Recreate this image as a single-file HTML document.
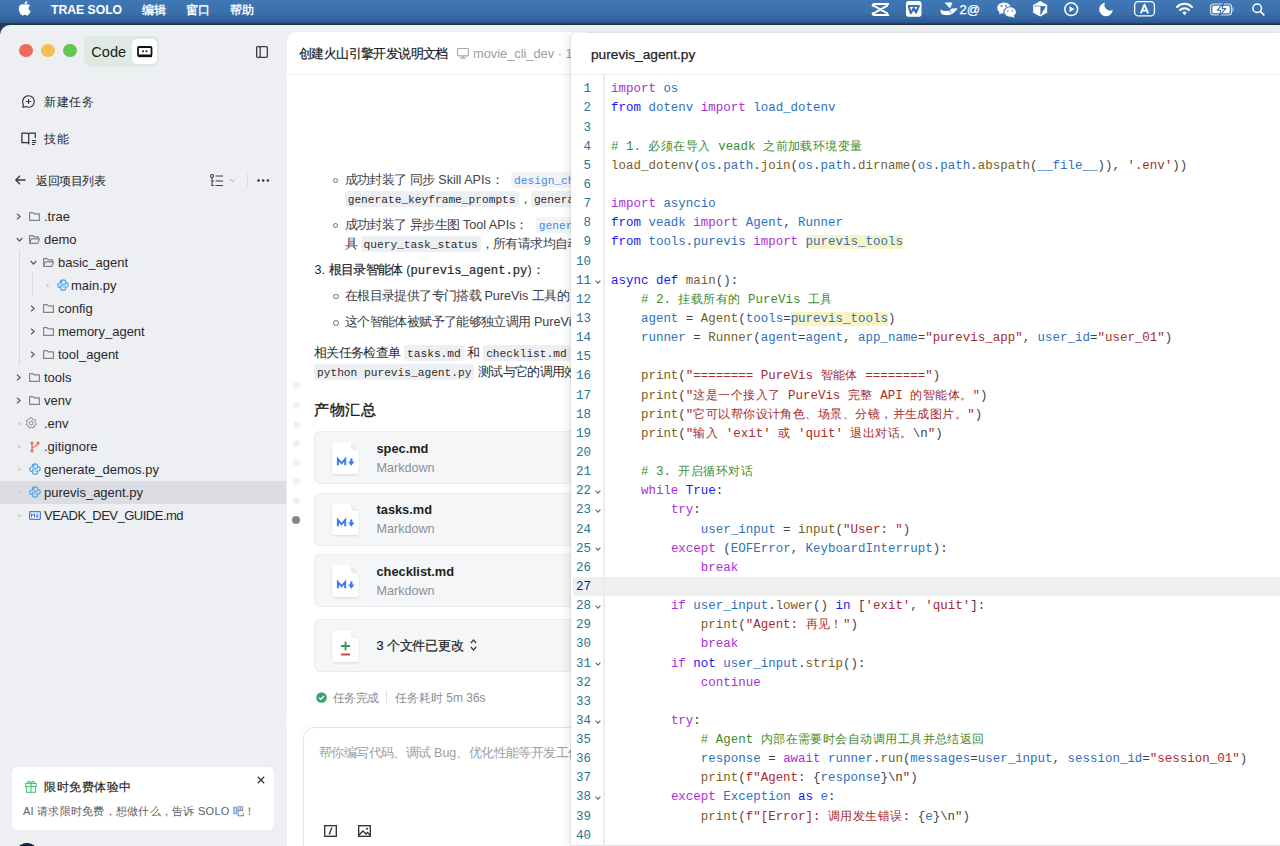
<!DOCTYPE html>
<html><head><meta charset="utf-8"><style>
*{box-sizing:border-box;margin:0;padding:0}
html,body{width:1280px;height:846px;overflow:hidden;background:#eeeff3;font-family:"Liberation Sans",sans-serif;color:#1f2023}
.a{position:absolute}
svg{position:absolute;overflow:visible}
#menubar{position:absolute;left:0;top:0;width:1280px;height:25px;background:linear-gradient(#3f78b5,#3b72ae 45%,#3466a0 72%,#2c5a8e 88%,#264d7a);}
#menubar .shade{position:absolute;left:0;right:0;top:23px;height:2px;background:linear-gradient(#2a4a6e,#1b2635)}
.mt{position:absolute;top:0;height:23px;line-height:19px;color:#fff;font-size:12.5px;white-space:nowrap}
#win{position:absolute;left:0;top:25px;width:1280px;height:821px;background:#eeeff3;border-top-left-radius:10px;overflow:hidden}
#winbg{position:absolute;left:0;top:23px;width:14px;height:14px;background:#253a55}
.tl{position:absolute;width:13.5px;height:13.5px;border-radius:50%}
.side{position:absolute;font-size:13px;color:#26282c;white-space:nowrap;line-height:16px}
.tr{position:absolute;left:0;width:286px;height:23px}
.tr .l{position:absolute;top:0;line-height:23px;font-size:13px;color:#27292e;white-space:nowrap}
.dot{position:absolute;width:3px;height:3px;border-radius:50%;background:#c9cacf;top:10px}
#mid{position:absolute;left:286.5px;top:32px;width:300px;height:814px;background:#fff;border-top-left-radius:9px;overflow:hidden}
#code{position:absolute;left:571px;top:33px;width:709px;height:813px;background:#fff;border-top-left-radius:5px;box-shadow:-1px 0 2px rgba(0,0,0,0.09),-5px 0 10px rgba(0,0,0,0.06);overflow:hidden}
.ln{position:absolute;left:0;width:20px;text-align:right;font-family:"Liberation Mono",monospace;font-size:12.47px;color:#2b7491;height:19.2px;line-height:19.2px}
.cl{position:absolute;left:40px;white-space:pre;font-family:"Liberation Mono",monospace;font-size:12.47px;color:#3b3b3b;height:19.2px;line-height:19.2px}
.cj{letter-spacing:0.45px}
.kp{color:#a92fd6}.kb{color:#1818f0}.v{color:#2f70bd}.f{color:#795e26}.s{color:#a52c2c}.c{color:#3f8a2c}.p{color:#444}.cls{color:#2f70bd}
.hl{background:#f8f4c4}
.mtxt{position:absolute;white-space:nowrap;font-size:12.6px;line-height:19px;color:#5d6068}
.chip{font-family:"Liberation Mono",monospace;font-size:11.2px;background:#eeeff2;border-radius:3px;padding:2.5px 3px 1px;color:#2b2d31}
.link{font-family:"Liberation Mono",monospace;font-size:11.2px;background:#f3f4f6;border-radius:3px;padding:2.5px 3px 1px;color:#4a86f0}
</style></head><body>
<div id="menubar"><div class="shade"></div><svg style="left:19px;top:1px" width="12.5" height="14.7" viewBox="0 0 170 200"><path fill="#fff" d="M150.4 155.6c-2.8 6.4-6.1 12.3-9.9 17.7-5.2 7.4-9.5 12.6-12.8 15.4-5.1 4.7-10.6 7.1-16.5 7.3-4.2 0-9.3-1.2-15.2-3.6-5.9-2.4-11.4-3.6-16.4-3.6-5.2 0-10.9 1.2-16.9 3.6-6 2.4-10.9 3.7-14.6 3.8-5.6 0.2-11.2-2.2-16.8-7.4-3.6-3.1-8.1-8.5-13.4-16.1-5.7-8.1-10.4-17.5-14.1-28.2C-0.2 123.1-2 111.6-2 100.5c0-12.7 2.7-23.7 8.2-32.9 4.3-7.4 10.1-13.2 17.2-17.4 7.2-4.3 14.9-6.4 23.3-6.6 4.6 0 10.6 1.4 18 4.2 7.4 2.8 12.2 4.2 14.3 4.2 1.6 0 6.9-1.7 15.9-5 8.5-3.1 15.7-4.4 21.6-3.9 16 1.3 28 7.6 36 19-14.3 8.7-21.4 20.8-21.3 36.4 0.1 12.1 4.5 22.2 13.2 30.3 3.9 3.7 8.3 6.6 13.2 8.6-1.1 3.1-2.2 6.1-3.4 9zM113.8 7.6c0 9.5-3.5 18.4-10.4 26.6-8.4 9.8-18.5 15.4-29.5 14.5-0.1-1.1-0.2-2.3-0.2-3.6 0-9.1 4-18.9 11-26.8 3.5-4 8-7.3 13.4-10 5.4-2.6 10.5-4.1 15.3-4.3 0.1 1.2 0.2 2.5 0.2 3.6z"/></svg><div class="mt" style="left:51px;top:0.8px;font-weight:bold;font-size:12.2px;letter-spacing:0px">TRAE SOLO</div><div class="mt" style="left:142px;top:1px;font-size:12px;letter-spacing:0.3px;-webkit-text-stroke:0.35px #fff">编辑</div><div class="mt" style="left:186px;top:1px;font-size:12px;letter-spacing:0.3px;-webkit-text-stroke:0.35px #fff">窗口</div><div class="mt" style="left:230px;top:1px;font-size:12px;letter-spacing:0.3px;-webkit-text-stroke:0.35px #fff">帮助</div><svg style="left:871px;top:2px" width="19" height="15" viewBox="0 0 19 15"><path d="M17.3 2 L3.5 2 Q1.3 2 1.6 3.8 M17.3 13 L3.5 13 Q1.3 13 1.6 11.2 M2.6 3.6 L16.3 11.4 M16.3 3.6 L2.6 11.4" stroke="#fff" stroke-width="1.8" fill="none" stroke-linecap="round"/></svg><svg style="left:905.8px;top:1.2px" width="16" height="16" viewBox="0 0 16 16"><rect x="0" y="0" width="15.5" height="15.7" rx="2.8" fill="#fff"/><path d="M2.6 5 L4.8 12.2 L7.8 7 L10 11.5 L13 4.6 M2 5 L13.5 5" stroke="#3a6fab" stroke-width="2.1" fill="none" stroke-linejoin="round"/></svg><svg style="left:940px;top:2px" width="18" height="14" viewBox="0 0 18 14"><path d="M4.5 0.5 L12.5 0.5 L10 6.5 Z" fill="#fff"/><path d="M0.3 7.5 C3 9 6 9.5 9 8.8 L12 6.5 L17.7 6.3 C16 9 13.5 12.2 9 13 C6 13.5 3 12.8 1 11.5 Z" fill="#fff"/><path d="M9 8.8 L11.5 11" stroke="#3a6fab" stroke-width="0.9"/></svg><div class="mt" style="left:959.5px;font-size:13px;top:0.3px;-webkit-text-stroke:0.25px #fff">2@</div><svg style="left:997px;top:1.5px" width="20" height="16" viewBox="0 0 20 16"><ellipse cx="7" cy="6" rx="6.8" ry="5.6" fill="#fff"/><path d="M2.5 9.5 L2.3 12.2 L5.5 10.8Z" fill="#fff"/><ellipse cx="13.2" cy="10" rx="6.3" ry="5.2" fill="#fff" stroke="#3a6fab" stroke-width="1.1"/><path d="M16.5 13.5 L18 15.8 L14 14.8Z" fill="#fff"/><circle cx="4.5" cy="4" r="0.9" fill="#3a6fab"/><circle cx="9" cy="4" r="0.9" fill="#3a6fab"/><circle cx="10.8" cy="9" r="0.8" fill="#3a6fab"/><circle cx="15.3" cy="9" r="0.8" fill="#3a6fab"/></svg><svg style="left:1033px;top:1.2px" width="15" height="16" viewBox="0 0 15 16"><path d="M7.2 0 L14.2 3.9 L14.2 11.7 L7.2 15.6 L0.2 11.7 L0.2 3.9 Z" fill="#fff"/><path d="M1.2 4.5 L13 5.2 L7.6 14.3 Z" fill="#3a6fab"/><path d="M2.2 5.2 L7.4 5.5 L7.4 13.2 L2.2 10.8Z" fill="#fff"/></svg><svg style="left:1063.5px;top:2px" width="15" height="15" viewBox="0 0 15 15"><circle cx="7.2" cy="7.2" r="6.4" stroke="#fff" stroke-width="1.5" fill="none"/><path d="M5.5 4.3 L10.6 7.2 L5.5 10.1Z" fill="#fff"/></svg><svg style="left:1098.5px;top:2.2px" width="15" height="15" viewBox="0 0 15 15"><path d="M5.97 0.781 A6.8 6.8 0 1 0 13.79 7.735 A5.5 5.5 0 0 1 5.97 0.781Z" fill="#fff"/></svg><svg style="left:1134px;top:1.2px" width="22" height="16" viewBox="0 0 22 16"><rect x="0.65" y="0.65" width="19.8" height="14.3" rx="3.8" stroke="#fff" stroke-width="1.3" fill="none"/><path d="M6.8 12.3 L10.5 3.6 L14.2 12.3 M8.2 9.6 L12.8 9.6" stroke="#fff" stroke-width="1.8" fill="none" stroke-linejoin="round"/></svg><svg style="left:1175.5px;top:2.5px" width="18" height="13" viewBox="0 0 18 13"><path d="M8.5 12.3 L6.3 9.6 A3.3 3.3 0 0 1 10.7 9.6Z" fill="#fff"/><path d="M4 7 A6.5 6.5 0 0 1 13 7 M1 4 A10.5 10.5 0 0 1 16 4" stroke="#fff" stroke-width="2" fill="none" stroke-linecap="round"/></svg><svg style="left:1210px;top:3px" width="25" height="14" viewBox="0 0 25 14"><rect x="0.6" y="1" width="21" height="11" rx="3" stroke="#fff" stroke-width="1.1" fill="none" opacity="0.8"/><rect x="2.4" y="2.8" width="17.4" height="7.4" rx="1.5" fill="#fff"/><path d="M23 4.6 L23 8.4" stroke="#fff" stroke-width="1.3" opacity="0.55"/><path d="M13.6 0.3 L7.2 7.2 L10.9 7.2 L9.1 13.2 L15.8 5.6 L12.1 5.6 Z" fill="#fff" stroke="#3a6fab" stroke-width="1.1" stroke-linejoin="round"/></svg><svg style="left:1251.5px;top:2.5px" width="13" height="13" viewBox="0 0 13 13"><circle cx="5.2" cy="5.2" r="4.3" stroke="#fff" stroke-width="1.5" fill="none"/><path d="M8.4 8.4 L11.8 11.8" stroke="#fff" stroke-width="1.7" stroke-linecap="round"/></svg></div><div id="winbg"></div><div id="win"></div><div class="tl" style="left:19.2px;top:43.8px;background:#ee6a5f"></div><div class="tl" style="left:41.2px;top:43.8px;background:#f5be4f"></div><div class="tl" style="left:63.2px;top:43.8px;background:#62c655"></div><div class="a" style="left:84px;top:36px;width:75px;height:31px;border-radius:8px;background:#dde9e2"></div><div class="side" style="left:91.3px;top:44px;font-size:14.6px;color:#1c1c1c;line-height:17px">Code</div><div class="a" style="left:132px;top:39px;width:25px;height:25px;border-radius:5px;background:#fff"></div><svg style="left:137px;top:46px" width="16" height="12" viewBox="0 0 16 12"><rect x="1" y="1" width="13.5" height="8.5" rx="1" stroke="#111" stroke-width="1.8" fill="none"/><path d="M1 10.5 L15 10.5" stroke="#111" stroke-width="1.3"/><circle cx="6" cy="5.3" r="1" fill="#111"/><circle cx="9.5" cy="5.3" r="1" fill="#111"/></svg><svg style="left:256px;top:46px" width="12" height="12" viewBox="0 0 12 12"><rect x="0.65" y="0.65" width="10.7" height="10.7" rx="1" stroke="#3a3b40" stroke-width="1.3" fill="none"/><path d="M4.2 0.7 L4.2 11.3" stroke="#3a3b40" stroke-width="1.3"/></svg><svg style="left:22px;top:94.6px" width="13" height="13" viewBox="0 0 14 14"><path d="M7 0.8 A6.2 6.2 0 1 1 4.2 12.5 L0.8 13.2 L1.6 10.2 A6.2 6.2 0 0 1 7 0.8Z" stroke="#35373c" stroke-width="1.2" fill="none" stroke-linejoin="round"/><path d="M7 4.2 L7 9.8 M4.2 7 L9.8 7" stroke="#35373c" stroke-width="1.2"/></svg><div class="side" style="left:44px;top:94px;font-size:12.4px;letter-spacing:0.5px">新建任务</div><svg style="left:21px;top:131.8px" width="16" height="14" viewBox="0 0 16 14"><path d="M7.75 2.2 Q7.4 1.1 6.5 1.1 L0.9 1.1 L0.9 10.7 L6.6 10.7 Q7.75 10.9 7.75 11.9 L7.75 2.2 Q8.1 1.1 9 1.1 L14.3 1.1 L14.3 6" stroke="#2e3034" stroke-width="1.2" fill="none" stroke-linejoin="round"/><path d="M10.9 8.5 L15.2 8.5 M10.9 10.5 L15.2 10.5 M10.9 12.5 L13.8 12.5" stroke="#2e3034" stroke-width="1.1"/></svg><div class="side" style="left:44px;top:130.5px;font-size:12.4px;letter-spacing:0.5px">技能</div><svg style="left:15px;top:175px" width="11" height="10" viewBox="0 0 11 10"><path d="M10.5 5 L1 5 M5 0.8 L0.8 5 L5 9.2" stroke="#35373c" stroke-width="1.3" fill="none"/></svg><div class="side" style="left:36px;top:172.5px;font-size:11.8px;letter-spacing:-0.4px">返回项目列表</div><svg style="left:210px;top:174px" width="14" height="13" viewBox="0 0 14 13"><circle cx="2" cy="2" r="1.5" stroke="#3a3b40" stroke-width="1.1" fill="none"/><path d="M2 3.5 L2 11.5 L4 11.5 M2 7 L4 7" stroke="#3a3b40" stroke-width="1.1" fill="none"/><path d="M5.5 2 L13 2 M5.5 7 L13 7 M5.5 11.5 L13 11.5" stroke="#3a3b40" stroke-width="1.2"/></svg><svg style="left:230px;top:178.8px" width="5" height="3" viewBox="0 0 5 3"><path d="M0.4 0.4 L2.5 2.5 L4.6 0.4" stroke="#9a9ca3" stroke-width="0.9" fill="none"/></svg><div class="a" style="left:247px;top:173px;width:1.2px;height:15px;background:#dfe0e4"></div><svg style="left:257.3px;top:178.6px" width="13" height="3" viewBox="0 0 13 3"><circle cx="1.5" cy="1.5" r="1.25" fill="#2e3034"/><circle cx="6.2" cy="1.5" r="1.25" fill="#2e3034"/><circle cx="10.9" cy="1.5" r="1.25" fill="#2e3034"/></svg><div class="a" style="left:0;top:481px;width:286px;height:23px;background:#dcdde2"></div><div class="a" style="left:19px;top:250px;width:1px;height:115px;background:#d8d9de"></div><div class="a" style="left:32px;top:273px;width:1px;height:23px;background:#d8d9de"></div><svg style="left:16px;top:212.5px" width="6" height="7" viewBox="0 0 6 7"><path d="M1 0.8 L4.2 3.5 L1 6.2" stroke="#5a5c62" stroke-width="1.2" fill="none"/></svg><svg style="left:29px;top:211.5px" width="11" height="9" viewBox="0 0 11 9"><path d="M0.6 0.6 L4 0.6 L5.2 1.9 L10.4 1.9 L10.4 8.4 L0.6 8.4 Z" stroke="#80848f" stroke-width="1.2" fill="none" stroke-linejoin="round"/></svg><div class="tr" style="top:204.5px"><div class="l" style="left:44px;">.trae</div></div><svg style="left:16px;top:236.5px" width="7" height="5" viewBox="0 0 7 5"><path d="M0.8 1 L3.5 4 L6.2 1" stroke="#5a5c62" stroke-width="1.2" fill="none"/></svg><svg style="left:29px;top:234.5px" width="11" height="9" viewBox="0 0 11 9"><path d="M0.6 8.4 L0.6 0.6 L4 0.6 L5.2 1.9 L9.4 1.9 L9.4 3.6 M0.6 8.4 L2.3 3.8 L10.6 3.8 L8.8 8.4 Z" stroke="#80848f" stroke-width="1.2" fill="none" stroke-linejoin="round"/></svg><div class="tr" style="top:227.5px"><div class="l" style="left:44px;">demo</div></div><svg style="left:30px;top:259.5px" width="7" height="5" viewBox="0 0 7 5"><path d="M0.8 1 L3.5 4 L6.2 1" stroke="#5a5c62" stroke-width="1.2" fill="none"/></svg><svg style="left:43px;top:257.5px" width="11" height="9" viewBox="0 0 11 9"><path d="M0.6 8.4 L0.6 0.6 L4 0.6 L5.2 1.9 L9.4 1.9 L9.4 3.6 M0.6 8.4 L2.3 3.8 L10.6 3.8 L8.8 8.4 Z" stroke="#80848f" stroke-width="1.2" fill="none" stroke-linejoin="round"/></svg><div class="tr" style="top:250.5px"><div class="l" style="left:58px;">basic_agent</div></div><div class="a" style="left:45.5px;top:283.5px;width:3px;height:3px;border-radius:50%;background:#cfd0d5"></div><svg style="left:56.5px;top:279px" width="12" height="12" viewBox="0 0 12 12"><path d="M6 0.8 C3.5 0.8 3.3 1.8 3.3 2.8 L3.3 4 L6.2 4 M3 4 C1.5 4 0.8 5 0.8 6.2 C0.8 7.6 1.6 8.4 2.8 8.4 L3.6 8.4 L3.6 7.5 C3.6 6.6 4.4 5.9 5.3 5.9 L6.8 5.9 C7.7 5.9 8.5 5.2 8.5 4.3 L8.5 2.6 C8.5 1.5 7.5 0.8 6 0.8Z M6 11.2 C8.5 11.2 8.7 10.2 8.7 9.2 L8.7 8 L5.8 8 M9 8 C10.5 8 11.2 7 11.2 5.8 C11.2 4.4 10.4 3.6 9.2 3.6 L8.4 3.6" stroke="#4ea8e8" stroke-width="1.2" fill="none" stroke-linejoin="round"/><path d="M3.6 7.5 L3.6 9.4 C3.6 10.5 4.5 11.2 6 11.2" stroke="#4ea8e8" stroke-width="1.2" fill="none"/></svg><div class="tr" style="top:273.5px"><div class="l" style="left:71px;">main.py</div></div><svg style="left:30px;top:304.5px" width="6" height="7" viewBox="0 0 6 7"><path d="M1 0.8 L4.2 3.5 L1 6.2" stroke="#5a5c62" stroke-width="1.2" fill="none"/></svg><svg style="left:43px;top:303.5px" width="11" height="9" viewBox="0 0 11 9"><path d="M0.6 0.6 L4 0.6 L5.2 1.9 L10.4 1.9 L10.4 8.4 L0.6 8.4 Z" stroke="#80848f" stroke-width="1.2" fill="none" stroke-linejoin="round"/></svg><div class="tr" style="top:296.5px"><div class="l" style="left:58px;">config</div></div><svg style="left:30px;top:327.5px" width="6" height="7" viewBox="0 0 6 7"><path d="M1 0.8 L4.2 3.5 L1 6.2" stroke="#5a5c62" stroke-width="1.2" fill="none"/></svg><svg style="left:43px;top:326.5px" width="11" height="9" viewBox="0 0 11 9"><path d="M0.6 0.6 L4 0.6 L5.2 1.9 L10.4 1.9 L10.4 8.4 L0.6 8.4 Z" stroke="#80848f" stroke-width="1.2" fill="none" stroke-linejoin="round"/></svg><div class="tr" style="top:319.5px"><div class="l" style="left:58px;">memory_agent</div></div><svg style="left:30px;top:350.5px" width="6" height="7" viewBox="0 0 6 7"><path d="M1 0.8 L4.2 3.5 L1 6.2" stroke="#5a5c62" stroke-width="1.2" fill="none"/></svg><svg style="left:43px;top:349.5px" width="11" height="9" viewBox="0 0 11 9"><path d="M0.6 0.6 L4 0.6 L5.2 1.9 L10.4 1.9 L10.4 8.4 L0.6 8.4 Z" stroke="#80848f" stroke-width="1.2" fill="none" stroke-linejoin="round"/></svg><div class="tr" style="top:342.5px"><div class="l" style="left:58px;">tool_agent</div></div><svg style="left:16px;top:373.5px" width="6" height="7" viewBox="0 0 6 7"><path d="M1 0.8 L4.2 3.5 L1 6.2" stroke="#5a5c62" stroke-width="1.2" fill="none"/></svg><svg style="left:29px;top:372.5px" width="11" height="9" viewBox="0 0 11 9"><path d="M0.6 0.6 L4 0.6 L5.2 1.9 L10.4 1.9 L10.4 8.4 L0.6 8.4 Z" stroke="#80848f" stroke-width="1.2" fill="none" stroke-linejoin="round"/></svg><div class="tr" style="top:365.5px"><div class="l" style="left:44px;">tools</div></div><svg style="left:16px;top:396.5px" width="6" height="7" viewBox="0 0 6 7"><path d="M1 0.8 L4.2 3.5 L1 6.2" stroke="#5a5c62" stroke-width="1.2" fill="none"/></svg><svg style="left:29px;top:395.5px" width="11" height="9" viewBox="0 0 11 9"><path d="M0.6 0.6 L4 0.6 L5.2 1.9 L10.4 1.9 L10.4 8.4 L0.6 8.4 Z" stroke="#80848f" stroke-width="1.2" fill="none" stroke-linejoin="round"/></svg><div class="tr" style="top:388.5px"><div class="l" style="left:44px;">venv</div></div><div class="a" style="left:17.5px;top:421.5px;width:3px;height:3px;border-radius:50%;background:#cfd0d5"></div><svg style="left:25px;top:417px" width="12" height="12" viewBox="0 0 12 12"><path d="M6 0.8 L7.2 1 L7.5 2.3 L8.6 2.9 L9.9 2.4 L10.7 3.4 L10 4.6 L10.3 5.9 L11.3 6.6 L11 7.8 L9.7 8 L8.9 9 L9.2 10.3 L8.1 11 L7 10.2 L5.8 10.3 L4.8 11.1 L3.7 10.5 L3.8 9.2 L3 8.3 L1.6 8.1 L1.2 7 L2.2 6.1 L2.2 4.9 L1.3 4 L1.9 2.9 L3.2 3 L4.1 2.2 L4.5 1 Z" stroke="#868a94" stroke-width="1" fill="none" stroke-linejoin="round"/><circle cx="6.2" cy="6.1" r="1.8" stroke="#868a94" stroke-width="1" fill="none"/></svg><div class="tr" style="top:411.5px"><div class="l" style="left:44px;">.env</div></div><div class="a" style="left:17.5px;top:444.5px;width:3px;height:3px;border-radius:50%;background:#cfd0d5"></div><svg style="left:30px;top:440.5px" width="10" height="12" viewBox="0 0 10 12"><circle cx="2" cy="2" r="1.6" fill="#e8714e"/><circle cx="8" cy="2" r="1.6" fill="#e8714e"/><circle cx="2" cy="10" r="1.6" fill="#e8714e"/><path d="M2 2 L2 10 M8 2 C8 6 2 5 2 8" stroke="#e8714e" stroke-width="1.3" fill="none"/></svg><div class="tr" style="top:434.5px"><div class="l" style="left:44px;">.gitignore</div></div><div class="a" style="left:17.5px;top:467.5px;width:3px;height:3px;border-radius:50%;background:#cfd0d5"></div><svg style="left:28.5px;top:463px" width="12" height="12" viewBox="0 0 12 12"><path d="M6 0.8 C3.5 0.8 3.3 1.8 3.3 2.8 L3.3 4 L6.2 4 M3 4 C1.5 4 0.8 5 0.8 6.2 C0.8 7.6 1.6 8.4 2.8 8.4 L3.6 8.4 L3.6 7.5 C3.6 6.6 4.4 5.9 5.3 5.9 L6.8 5.9 C7.7 5.9 8.5 5.2 8.5 4.3 L8.5 2.6 C8.5 1.5 7.5 0.8 6 0.8Z M6 11.2 C8.5 11.2 8.7 10.2 8.7 9.2 L8.7 8 L5.8 8 M9 8 C10.5 8 11.2 7 11.2 5.8 C11.2 4.4 10.4 3.6 9.2 3.6 L8.4 3.6" stroke="#4ea8e8" stroke-width="1.2" fill="none" stroke-linejoin="round"/><path d="M3.6 7.5 L3.6 9.4 C3.6 10.5 4.5 11.2 6 11.2" stroke="#4ea8e8" stroke-width="1.2" fill="none"/></svg><div class="tr" style="top:457.5px"><div class="l" style="left:44px;">generate_demos.py</div></div><div class="a" style="left:17.5px;top:490.5px;width:3px;height:3px;border-radius:50%;background:#cfd0d5"></div><svg style="left:28.5px;top:486px" width="12" height="12" viewBox="0 0 12 12"><path d="M6 0.8 C3.5 0.8 3.3 1.8 3.3 2.8 L3.3 4 L6.2 4 M3 4 C1.5 4 0.8 5 0.8 6.2 C0.8 7.6 1.6 8.4 2.8 8.4 L3.6 8.4 L3.6 7.5 C3.6 6.6 4.4 5.9 5.3 5.9 L6.8 5.9 C7.7 5.9 8.5 5.2 8.5 4.3 L8.5 2.6 C8.5 1.5 7.5 0.8 6 0.8Z M6 11.2 C8.5 11.2 8.7 10.2 8.7 9.2 L8.7 8 L5.8 8 M9 8 C10.5 8 11.2 7 11.2 5.8 C11.2 4.4 10.4 3.6 9.2 3.6 L8.4 3.6" stroke="#4ea8e8" stroke-width="1.2" fill="none" stroke-linejoin="round"/><path d="M3.6 7.5 L3.6 9.4 C3.6 10.5 4.5 11.2 6 11.2" stroke="#4ea8e8" stroke-width="1.2" fill="none"/></svg><div class="tr" style="top:480.5px"><div class="l" style="left:44px;">purevis_agent.py</div></div><div class="a" style="left:17.5px;top:513.5px;width:3px;height:3px;border-radius:50%;background:#cfd0d5"></div><svg style="left:29px;top:510.5px" width="12" height="9" viewBox="0 0 12 9"><rect x="0.6" y="0.6" width="10.8" height="7.8" rx="0.8" stroke="#4a7ee6" stroke-width="1.2" fill="none"/><path d="M2.5 6.3 L2.5 2.7 L4 4.3 L5.5 2.7 L5.5 6.3" stroke="#4a7ee6" stroke-width="1" fill="none"/><path d="M8.2 2.5 L8.2 6 M6.9 4.8 L8.2 6.3 L9.5 4.8" stroke="#4a7ee6" stroke-width="1" fill="none"/></svg><div class="tr" style="top:503.5px"><div class="l" style="left:44px;letter-spacing:-0.5px;">VEADK_DEV_GUIDE.md</div></div><div class="a" style="left:12px;top:767px;width:262px;height:63px;background:#fff;border-radius:6px"></div><svg style="left:25px;top:780px" width="12" height="13" viewBox="0 0 12 13"><rect x="0.7" y="3.5" width="10.6" height="3" stroke="#4cc27a" stroke-width="1.1" fill="none"/><rect x="1.5" y="6.5" width="9" height="5.8" stroke="#4cc27a" stroke-width="1.1" fill="none"/><path d="M6 3.5 L6 12.3 M6 3.3 C4.5 0.5 2 1 3 3.3 M6 3.3 C7.5 0.5 10 1 9 3.3" stroke="#4cc27a" stroke-width="1.1" fill="none"/></svg><div class="side" style="left:44px;top:779px;font-size:12px;letter-spacing:0.58px;-webkit-text-stroke:0.15px #1d1e21;color:#1d1e21">限时免费体验中</div><svg style="left:257px;top:776px" width="8" height="8" viewBox="0 0 8 8"><path d="M0.8 0.8 L7.2 7.2 M7.2 0.8 L0.8 7.2" stroke="#3a3b40" stroke-width="1.3"/></svg><div class="side" style="left:23px;top:803px;font-size:11px;letter-spacing:0.25px;color:#5e6067">AI 请求限时免费，想做什么，告诉 SOLO 吧！</div><div class="a" style="left:13.4px;top:840.5px;width:28px;height:28px;border-radius:50%;background:#14243a;border:2.5px solid #f3efe3"></div>
<div id="mid"></div><div class="a" style="left:286px;top:74px;width:286px;height:1px;background:#eeeff1"></div><div class="side" style="left:299px;top:46.3px;font-size:12.5px;letter-spacing:-0.6px;-webkit-text-stroke:0.2px #1b1c1f;color:#1b1c1f">创建火山引擎开发说明文档</div><svg style="left:456.5px;top:47.8px" width="12" height="11" viewBox="0 0 12 11"><rect x="0.55" y="0.55" width="10.9" height="7.3" rx="1" stroke="#a3a5ab" stroke-width="1.1" fill="none"/><path d="M6 7.9 L6 9.9 M3.4 10.1 L8.6 10.1" stroke="#a3a5ab" stroke-width="1.1"/></svg><div class="side" style="left:473px;top:45.6px;font-size:12.8px;color:#9a9ca2">movie_cli_dev · 1</div><div class="a" style="left:332.8px;top:177.5px;width:5.5px;height:5.5px;border-radius:50%;border:1px solid #6d7077"></div><div class="mtxt" style="left:344.7px;top:170.5px;color:#3f4247"><span style="letter-spacing:-0.64px">成功封装了</span> <span style="letter-spacing:-0.64px">同步</span> Skill APIs<span style="letter-spacing:-0.64px">：</span><span style="display:inline-block;width:8px"></span><span class="link">design_character</span></div><div class="mtxt" style="left:344.7px;top:189.5px;color:#3f4247"><span class="chip">generate_keyframe_prompts</span><span style="letter-spacing:-0.64px">，</span><span class="chip">generate_storyboard</span></div><div class="a" style="left:332.8px;top:222.8px;width:5.5px;height:5.5px;border-radius:50%;border:1px solid #6d7077"></div><div class="mtxt" style="left:344.7px;top:215.8px;color:#3f4247"><span style="letter-spacing:-0.64px">成功封装了</span> <span style="letter-spacing:-0.64px">异步生图</span> Tool APIs<span style="letter-spacing:-0.64px">：</span><span style="display:inline-block;width:8px"></span><span class="link">generate_image</span></div><div class="mtxt" style="left:344.7px;top:234.8px;color:#3f4247"><span style="letter-spacing:-0.64px">具</span> <span class="chip">query_task_status</span><span style="letter-spacing:-0.64px">，所有请求均自动</span></div><div class="mtxt" style="left:314.5px;top:260.5px;color:#24262a">3. <span style="-webkit-text-stroke:0.2px #24262a"><span style="letter-spacing:-0.64px">根目录智能体</span></span> (<span style="font-family:Liberation Mono;font-size:12.2px;-webkit-text-stroke:0.2px #24262a">purevis_agent.py</span>)<span style="letter-spacing:-0.64px">：</span></div><div class="a" style="left:333.1px;top:293.5px;width:5.5px;height:5.5px;border-radius:50%;border:1px solid #6d7077"></div><div class="mtxt" style="left:345px;top:286.5px;color:#3d4045"><span style="letter-spacing:-0.64px">在根目录提供了专门搭载</span> PureVis <span style="letter-spacing:-0.64px">工具的</span></div><div class="a" style="left:333.1px;top:320.0px;width:5.5px;height:5.5px;border-radius:50%;border:1px solid #6d7077"></div><div class="mtxt" style="left:345px;top:313px;color:#3d4045"><span style="letter-spacing:-0.64px">这个智能体被赋予了能够独立调用</span> PureVis</div><div class="mtxt" style="left:314px;top:343.5px;color:#2b2d31"><span style="letter-spacing:-0.64px">相关任务检查单</span> <span class="chip">tasks.md</span> <span style="letter-spacing:-0.64px">和</span> <span class="chip">checklist.md</span></div><div class="mtxt" style="left:314px;top:362.5px;color:#2b2d31"><span class="chip">python purevis_agent.py</span> <span style="letter-spacing:-0.64px">测试与它的调用效果</span></div><div class="a" style="left:292.5px;top:382.1px;width:7px;height:7px;border-radius:50%;background:#f1f1f3"></div><div class="a" style="left:292.5px;top:401.7px;width:7px;height:7px;border-radius:50%;background:#f1f1f3"></div><div class="a" style="left:292.5px;top:420.9px;width:7px;height:7px;border-radius:50%;background:#f1f1f3"></div><div class="a" style="left:292.5px;top:440.0px;width:7px;height:7px;border-radius:50%;background:#f1f1f3"></div><div class="a" style="left:292.5px;top:459.0px;width:7px;height:7px;border-radius:50%;background:#f1f1f3"></div><div class="a" style="left:292.5px;top:478.2px;width:7px;height:7px;border-radius:50%;background:#f1f1f3"></div><div class="a" style="left:292.5px;top:497.3px;width:7px;height:7px;border-radius:50%;background:#f1f1f3"></div><div class="a" style="left:291.8px;top:515.5px;width:8.5px;height:8.5px;border-radius:50%;background:#84868c"></div><div class="side" style="left:314px;top:400.5px;font-size:15px;letter-spacing:0.67px;-webkit-text-stroke:0.4px #1b1c1f;color:#1b1c1f;line-height:17px">产物汇总</div><div class="a" style="left:313.5px;top:431px;width:300px;height:53px;border-radius:6px;background:#f5f6f8;border:1px solid #ebecef"></div><svg style="left:331.5px;top:441.5px" width="27" height="33" viewBox="0 0 27 33"><defs><filter id="sh" x="-30%" y="-30%" width="160%" height="160%"><feDropShadow dx="0" dy="1" stdDeviation="1" flood-color="#000" flood-opacity="0.12"/></filter></defs><path d="M3 0.5 L19 0.5 L26.5 8 L26.5 29.5 Q26.5 32 24 32 L3 32 Q0.5 32 0.5 29.5 L0.5 3 Q0.5 0.5 3 0.5Z" fill="#fff" filter="url(#sh)"/><path d="M19 0.5 L19 5.5 Q19.5 8 22 8.3 L26.5 8.3 Z" fill="#ececef"/><path d="M5.9 23.3 L5.9 17.2 L9.55 21.2 L13.2 17.2 L13.2 23.3" stroke="#3b7cf0" stroke-width="2" fill="none" stroke-linejoin="miter" stroke-miterlimit="3"/><path d="M18.2 16.4 L20.4 16.4 L20.4 19.5 L22.5 19.5 L19.3 23.8 L16.1 19.5 L18.2 19.5 Z" fill="#3b7cf0"/></svg><div class="side" style="left:376.5px;top:440.5px;font-size:12.8px;font-weight:bold;color:#1d1e21">spec.md</div><div class="side" style="left:376.5px;top:459.5px;font-size:12.6px;color:#8e9096">Markdown</div><div class="a" style="left:313.5px;top:492.5px;width:300px;height:53px;border-radius:6px;background:#f5f6f8;border:1px solid #ebecef"></div><svg style="left:331.5px;top:503.0px" width="27" height="33" viewBox="0 0 27 33"><defs><filter id="sh" x="-30%" y="-30%" width="160%" height="160%"><feDropShadow dx="0" dy="1" stdDeviation="1" flood-color="#000" flood-opacity="0.12"/></filter></defs><path d="M3 0.5 L19 0.5 L26.5 8 L26.5 29.5 Q26.5 32 24 32 L3 32 Q0.5 32 0.5 29.5 L0.5 3 Q0.5 0.5 3 0.5Z" fill="#fff" filter="url(#sh)"/><path d="M19 0.5 L19 5.5 Q19.5 8 22 8.3 L26.5 8.3 Z" fill="#ececef"/><path d="M5.9 23.3 L5.9 17.2 L9.55 21.2 L13.2 17.2 L13.2 23.3" stroke="#3b7cf0" stroke-width="2" fill="none" stroke-linejoin="miter" stroke-miterlimit="3"/><path d="M18.2 16.4 L20.4 16.4 L20.4 19.5 L22.5 19.5 L19.3 23.8 L16.1 19.5 L18.2 19.5 Z" fill="#3b7cf0"/></svg><div class="side" style="left:376.5px;top:502.0px;font-size:12.8px;font-weight:bold;color:#1d1e21">tasks.md</div><div class="side" style="left:376.5px;top:521.0px;font-size:12.6px;color:#8e9096">Markdown</div><div class="a" style="left:313.5px;top:554px;width:300px;height:53px;border-radius:6px;background:#f5f6f8;border:1px solid #ebecef"></div><svg style="left:331.5px;top:564.5px" width="27" height="33" viewBox="0 0 27 33"><defs><filter id="sh" x="-30%" y="-30%" width="160%" height="160%"><feDropShadow dx="0" dy="1" stdDeviation="1" flood-color="#000" flood-opacity="0.12"/></filter></defs><path d="M3 0.5 L19 0.5 L26.5 8 L26.5 29.5 Q26.5 32 24 32 L3 32 Q0.5 32 0.5 29.5 L0.5 3 Q0.5 0.5 3 0.5Z" fill="#fff" filter="url(#sh)"/><path d="M19 0.5 L19 5.5 Q19.5 8 22 8.3 L26.5 8.3 Z" fill="#ececef"/><path d="M5.9 23.3 L5.9 17.2 L9.55 21.2 L13.2 17.2 L13.2 23.3" stroke="#3b7cf0" stroke-width="2" fill="none" stroke-linejoin="miter" stroke-miterlimit="3"/><path d="M18.2 16.4 L20.4 16.4 L20.4 19.5 L22.5 19.5 L19.3 23.8 L16.1 19.5 L18.2 19.5 Z" fill="#3b7cf0"/></svg><div class="side" style="left:376.5px;top:563.5px;font-size:12.8px;font-weight:bold;color:#1d1e21">checklist.md</div><div class="side" style="left:376.5px;top:582.5px;font-size:12.6px;color:#8e9096">Markdown</div><div class="a" style="left:313.5px;top:619.3px;width:300px;height:53px;border-radius:6px;background:#f5f6f8;border:1px solid #ebecef"></div><svg style="left:331.5px;top:629.8px" width="27" height="33" viewBox="0 0 27 33"><path d="M3 0.5 L19 0.5 L26.5 8 L26.5 29.5 Q26.5 32 24 32 L3 32 Q0.5 32 0.5 29.5 L0.5 3 Q0.5 0.5 3 0.5Z" fill="#fff" filter="url(#sh)"/><path d="M19 0.5 L19 6 Q19 8 21 8 L26.5 8" fill="#f0f1f3"/><path d="M13.5 11.5 L13.5 20.5 M9 16 L18 16" stroke="#2f9a5e" stroke-width="1.8"/><path d="M9 24.5 L18 24.5" stroke="#d0463b" stroke-width="2"/></svg><div class="side" style="left:376.6px;top:637.5px;font-size:12.8px;letter-spacing:-0.2px;-webkit-text-stroke:0.2px #1d1e21;color:#1d1e21">3 个文件已更改</div><svg style="left:470px;top:639px" width="7" height="12" viewBox="0 0 7 12"><path d="M0.8 4 L3.5 1 L6.2 4 M0.8 8 L3.5 11 L6.2 8" stroke="#35373c" stroke-width="1.2" fill="none"/></svg><svg style="left:316px;top:692px" width="11" height="11" viewBox="0 0 11 11"><circle cx="5.5" cy="5.5" r="5.3" fill="#3aa36a"/><path d="M3 5.6 L4.8 7.3 L8 4" stroke="#fff" stroke-width="1.3" fill="none"/></svg><div class="side" style="left:332.8px;top:689.5px;font-size:12px;letter-spacing:-0.5px;color:#8b8d93">任务完成</div><div class="a" style="left:386px;top:690px;width:1px;height:14px;background:#e0e1e5"></div><div class="side" style="left:394.9px;top:689.5px;font-size:12px;color:#8b8d93">任务耗时 5m 36s</div><div class="a" style="left:286px;top:708px;width:290px;height:20px;background:linear-gradient(rgba(255,255,255,0),#fff)"></div><div class="a" style="left:302.5px;top:726.5px;width:300px;height:140px;border-radius:12px;background:#fff;border:1px solid #e3e4e8;box-shadow:0 0 6px rgba(0,0,0,0.04)"></div><div class="side" style="left:319px;top:744.5px;font-size:12.5px;color:#9c9ea4"><span style="letter-spacing:-0.6px">帮你编写代码、调试</span> Bug<span style="letter-spacing:-0.6px">、优化性能等开发工作</span></div><svg style="left:323.5px;top:824.5px" width="13" height="12" viewBox="0 0 13 12"><rect x="0.7" y="0.7" width="11.6" height="10.6" stroke="#2b2d31" stroke-width="1.3" fill="none"/><path d="M7.8 2.5 L5.2 9.5" stroke="#2b2d31" stroke-width="1.3"/></svg><svg style="left:358px;top:824.5px" width="13" height="12" viewBox="0 0 13 12"><rect x="0.7" y="0.7" width="11.6" height="10.6" stroke="#2b2d31" stroke-width="1.3" fill="none"/><path d="M1 10 L5 6 L8 9 L9.5 7.5 L12 10" stroke="#2b2d31" stroke-width="1.3" fill="none"/><circle cx="9" cy="3.8" r="1" fill="#2b2d31"/></svg>
<div id="code"><div class="a" style="left:20px;top:13.5px;font-size:13.7px;-webkit-text-stroke:0.25px #222326;color:#222326;white-space:nowrap;line-height:16px">purevis_agent.py</div><div class="a" style="left:0;top:41px;width:709px;height:1px;background:#eeeff1"></div><div class="a" style="left:2px;top:544.3px;width:707px;height:19px;background:#efefef"></div><div class="a" style="left:0;top:811.5px;width:709px;height:2px;background:#e4e5e8"></div><div class="a" style="left:32px;top:42px;width:2px;height:780px;background:#ececec"></div><div class="ln" style="top:47.30px;color:#2b7491">1</div><div class="cl" style="top:47.30px"><span class="kp">import</span><span class="p"> </span><span class="v">os</span></div><div class="ln" style="top:66.44px;color:#2b7491">2</div><div class="cl" style="top:66.44px"><span class="kb">from</span><span class="p"> </span><span class="v">dotenv</span><span class="p"> </span><span class="kp">import</span><span class="p"> </span><span class="v">load_dotenv</span></div><div class="ln" style="top:85.58px;color:#2b7491">3</div><div class="cl" style="top:85.58px"></div><div class="ln" style="top:104.72px;color:#2b7491">4</div><div class="cl" style="top:104.72px"><span class="c"># 1. <span class="cj">必须在导入</span> veadk <span class="cj">之前加载环境变量</span></span></div><div class="ln" style="top:123.86px;color:#2b7491">5</div><div class="cl" style="top:123.86px"><span class="f">load_dotenv</span><span class="p">(</span><span class="v">os</span><span class="p">.</span><span class="v">path</span><span class="p">.</span><span class="f">join</span><span class="p">(</span><span class="v">os</span><span class="p">.</span><span class="v">path</span><span class="p">.</span><span class="f">dirname</span><span class="p">(</span><span class="v">os</span><span class="p">.</span><span class="v">path</span><span class="p">.</span><span class="f">abspath</span><span class="p">(</span><span class="v">__file__</span><span class="p">)), </span><span class="s">'.env'</span><span class="p">))</span></div><div class="ln" style="top:143.00px;color:#2b7491">6</div><div class="cl" style="top:143.00px"></div><div class="ln" style="top:162.14px;color:#2b7491">7</div><div class="cl" style="top:162.14px"><span class="kp">import</span><span class="p"> </span><span class="v">asyncio</span></div><div class="ln" style="top:181.28px;color:#2b7491">8</div><div class="cl" style="top:181.28px"><span class="kb">from</span><span class="p"> </span><span class="v">veadk</span><span class="p"> </span><span class="kp">import</span><span class="p"> </span><span class="v">Agent</span><span class="p">, </span><span class="v">Runner</span></div><div class="ln" style="top:200.42px;color:#2b7491">9</div><div class="cl" style="top:200.42px"><span class="kb">from</span><span class="p"> </span><span class="v">tools</span><span class="p">.</span><span class="v">purevis</span><span class="p"> </span><span class="kp">import</span><span class="p"> </span><span class="v hl">purevis_tools</span></div><div class="ln" style="top:219.56px;color:#2b7491">10</div><div class="cl" style="top:219.56px"></div><div class="ln" style="top:238.70px;color:#2b7491">11</div><svg style="left:24.4px;top:246.50px" width="6" height="4" viewBox="0 0 6 4"><path d="M0.6 0.6 L3 3.2 L5.4 0.6" stroke="#4a6a8a" stroke-width="1.1" fill="none"/></svg><div class="cl" style="top:238.70px"><span class="kb">async</span><span class="p"> </span><span class="kb">def</span><span class="p"> </span><span class="f">main</span><span class="p">():</span></div><div class="ln" style="top:257.84px;color:#2b7491">12</div><div class="cl" style="top:257.84px"><span class="p">    </span><span class="c"># 2. <span class="cj">挂载所有的</span> PureVis <span class="cj">工具</span></span></div><div class="ln" style="top:276.98px;color:#2b7491">13</div><div class="cl" style="top:276.98px"><span class="p">    </span><span class="v">agent</span><span class="p"> = </span><span class="f">Agent</span><span class="p">(</span><span class="v">tools</span><span class="p">=</span><span class="v hl">purevis_tools</span><span class="p">)</span></div><div class="ln" style="top:296.12px;color:#2b7491">14</div><div class="cl" style="top:296.12px"><span class="p">    </span><span class="v">runner</span><span class="p"> = </span><span class="f">Runner</span><span class="p">(</span><span class="v">agent</span><span class="p">=</span><span class="v">agent</span><span class="p">, </span><span class="v">app_name</span><span class="p">=</span><span class="s">"purevis_app"</span><span class="p">, </span><span class="v">user_id</span><span class="p">=</span><span class="s">"user_01"</span><span class="p">)</span></div><div class="ln" style="top:315.26px;color:#2b7491">15</div><div class="cl" style="top:315.26px"></div><div class="ln" style="top:334.40px;color:#2b7491">16</div><div class="cl" style="top:334.40px"><span class="p">    </span><span class="f">print</span><span class="p">(</span><span class="s">"======== PureVis <span class="cj">智能体</span> ========"</span><span class="p">)</span></div><div class="ln" style="top:353.54px;color:#2b7491">17</div><div class="cl" style="top:353.54px"><span class="p">    </span><span class="f">print</span><span class="p">(</span><span class="s">"<span class="cj">这是一个接入了</span> PureVis <span class="cj">完整</span> API <span class="cj">的智能体。</span>"</span><span class="p">)</span></div><div class="ln" style="top:372.68px;color:#2b7491">18</div><div class="cl" style="top:372.68px"><span class="p">    </span><span class="f">print</span><span class="p">(</span><span class="s">"<span class="cj">它可以帮你设计角色、场景、分镜，并生成图片。</span>"</span><span class="p">)</span></div><div class="ln" style="top:391.82px;color:#2b7491">19</div><div class="cl" style="top:391.82px"><span class="p">    </span><span class="f">print</span><span class="p">(</span><span class="s">"<span class="cj">输入</span> 'exit' <span class="cj">或</span> 'quit' <span class="cj">退出对话。</span></span><span class="p">\n</span><span class="s">"</span><span class="p">)</span></div><div class="ln" style="top:410.96px;color:#2b7491">20</div><div class="cl" style="top:410.96px"></div><div class="ln" style="top:430.10px;color:#2b7491">21</div><div class="cl" style="top:430.10px"><span class="p">    </span><span class="c"># 3. <span class="cj">开启循环对话</span></span></div><div class="ln" style="top:449.24px;color:#2b7491">22</div><svg style="left:24.4px;top:457.04px" width="6" height="4" viewBox="0 0 6 4"><path d="M0.6 0.6 L3 3.2 L5.4 0.6" stroke="#4a6a8a" stroke-width="1.1" fill="none"/></svg><div class="cl" style="top:449.24px"><span class="p">    </span><span class="kp">while</span><span class="p"> </span><span class="kb">True</span><span class="p">:</span></div><div class="ln" style="top:468.38px;color:#2b7491">23</div><svg style="left:24.4px;top:476.18px" width="6" height="4" viewBox="0 0 6 4"><path d="M0.6 0.6 L3 3.2 L5.4 0.6" stroke="#4a6a8a" stroke-width="1.1" fill="none"/></svg><div class="cl" style="top:468.38px"><span class="p">        </span><span class="kp">try</span><span class="p">:</span></div><div class="ln" style="top:487.52px;color:#2b7491">24</div><div class="cl" style="top:487.52px"><span class="p">            </span><span class="v">user_input</span><span class="p"> = </span><span class="f">input</span><span class="p">(</span><span class="s">"User: "</span><span class="p">)</span></div><div class="ln" style="top:506.66px;color:#2b7491">25</div><svg style="left:24.4px;top:514.46px" width="6" height="4" viewBox="0 0 6 4"><path d="M0.6 0.6 L3 3.2 L5.4 0.6" stroke="#4a6a8a" stroke-width="1.1" fill="none"/></svg><div class="cl" style="top:506.66px"><span class="p">        </span><span class="kp">except</span><span class="p"> (</span><span class="v">EOFError</span><span class="p">, </span><span class="v">KeyboardInterrupt</span><span class="p">):</span></div><div class="ln" style="top:525.80px;color:#2b7491">26</div><div class="cl" style="top:525.80px"><span class="p">            </span><span class="kp">break</span></div><div class="ln" style="top:544.94px;color:#1a1a8f">27</div><div class="cl" style="top:544.94px"></div><div class="ln" style="top:564.08px;color:#2b7491">28</div><svg style="left:24.4px;top:571.88px" width="6" height="4" viewBox="0 0 6 4"><path d="M0.6 0.6 L3 3.2 L5.4 0.6" stroke="#4a6a8a" stroke-width="1.1" fill="none"/></svg><div class="cl" style="top:564.08px"><span class="p">        </span><span class="kp">if</span><span class="p"> </span><span class="v">user_input</span><span class="p">.</span><span class="f">lower</span><span class="p">() </span><span class="kb">in</span><span class="p"> [</span><span class="s">'exit'</span><span class="p">, </span><span class="s">'quit'</span><span class="p">]:</span></div><div class="ln" style="top:583.22px;color:#2b7491">29</div><div class="cl" style="top:583.22px"><span class="p">            </span><span class="f">print</span><span class="p">(</span><span class="s">"Agent: <span class="cj">再见！</span>"</span><span class="p">)</span></div><div class="ln" style="top:602.36px;color:#2b7491">30</div><div class="cl" style="top:602.36px"><span class="p">            </span><span class="kp">break</span></div><div class="ln" style="top:621.50px;color:#2b7491">31</div><svg style="left:24.4px;top:629.30px" width="6" height="4" viewBox="0 0 6 4"><path d="M0.6 0.6 L3 3.2 L5.4 0.6" stroke="#4a6a8a" stroke-width="1.1" fill="none"/></svg><div class="cl" style="top:621.50px"><span class="p">        </span><span class="kp">if</span><span class="p"> </span><span class="kb">not</span><span class="p"> </span><span class="v">user_input</span><span class="p">.</span><span class="f">strip</span><span class="p">():</span></div><div class="ln" style="top:640.64px;color:#2b7491">32</div><div class="cl" style="top:640.64px"><span class="p">            </span><span class="kp">continue</span></div><div class="ln" style="top:659.78px;color:#2b7491">33</div><div class="cl" style="top:659.78px"></div><div class="ln" style="top:678.92px;color:#2b7491">34</div><svg style="left:24.4px;top:686.72px" width="6" height="4" viewBox="0 0 6 4"><path d="M0.6 0.6 L3 3.2 L5.4 0.6" stroke="#4a6a8a" stroke-width="1.1" fill="none"/></svg><div class="cl" style="top:678.92px"><span class="p">        </span><span class="kp">try</span><span class="p">:</span></div><div class="ln" style="top:698.06px;color:#2b7491">35</div><div class="cl" style="top:698.06px"><span class="p">            </span><span class="c"># Agent <span class="cj">内部在需要时会自动调用工具并总结返回</span></span></div><div class="ln" style="top:717.20px;color:#2b7491">36</div><div class="cl" style="top:717.20px"><span class="p">            </span><span class="v">response</span><span class="p"> = </span><span class="kp">await</span><span class="p"> </span><span class="v">runner</span><span class="p">.</span><span class="f">run</span><span class="p">(</span><span class="v">messages</span><span class="p">=</span><span class="v">user_input</span><span class="p">, </span><span class="v">session_id</span><span class="p">=</span><span class="s">"session_01"</span><span class="p">)</span></div><div class="ln" style="top:736.34px;color:#2b7491">37</div><div class="cl" style="top:736.34px"><span class="p">            </span><span class="f">print</span><span class="p">(</span><span class="s">f"Agent: </span><span class="p">{</span><span class="v">response</span><span class="p">}\n</span><span class="s">"</span><span class="p">)</span></div><div class="ln" style="top:755.48px;color:#2b7491">38</div><svg style="left:24.4px;top:763.28px" width="6" height="4" viewBox="0 0 6 4"><path d="M0.6 0.6 L3 3.2 L5.4 0.6" stroke="#4a6a8a" stroke-width="1.1" fill="none"/></svg><div class="cl" style="top:755.48px"><span class="p">        </span><span class="kp">except</span><span class="p"> </span><span class="v">Exception</span><span class="p"> </span><span class="kb">as</span><span class="p"> </span><span class="v">e</span><span class="p">:</span></div><div class="ln" style="top:774.62px;color:#2b7491">39</div><div class="cl" style="top:774.62px"><span class="p">            </span><span class="f">print</span><span class="p">(</span><span class="s">f"[Error]: <span class="cj">调用发生错误</span>: </span><span class="p">{</span><span class="v">e</span><span class="p">}\n</span><span class="s">"</span><span class="p">)</span></div><div class="ln" style="top:793.76px;color:#2b7491">40</div><div class="cl" style="top:793.76px"></div></div>
</body></html>
